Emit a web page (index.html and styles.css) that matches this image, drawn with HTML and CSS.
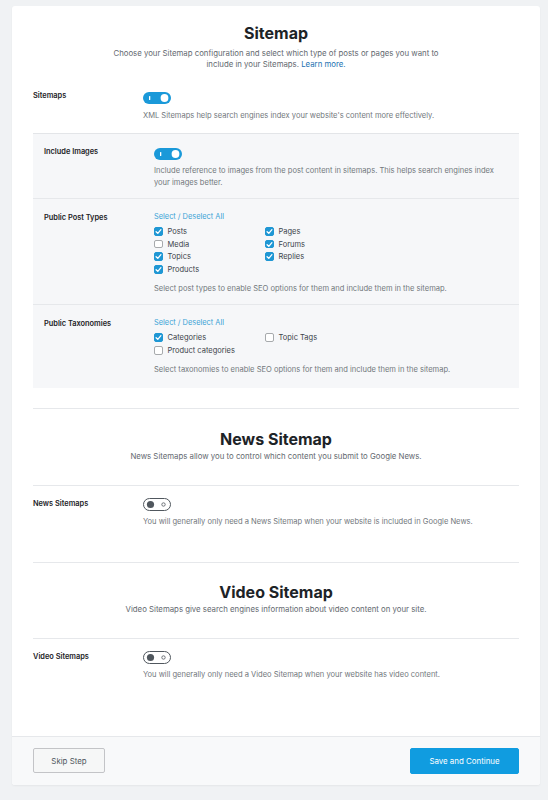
FILE: index.html
```html
<!DOCTYPE html>
<html lang="en">
<head>
<meta charset="utf-8">
<title>Sitemap</title>
<link rel="stylesheet" href="styles.css">
</head>
<body>
<div class="page">
  <div class="card">
    <div class="card-body">
      <section class="section first">
        <header class="sec-head">
          <h1>Sitemap</h1>
          <p>Choose your Sitemap configuration and select which type of posts or pages you want to include in your Sitemaps. <a href="#">Learn more.</a></p>
        </header>
        <div class="row plain">
          <div class="label">Sitemaps</div>
          <div class="control">
            <svg class="toggle" width="28" height="12" viewBox="0 0 28 12"><rect width="28" height="12" rx="6" fill="#1a99d9"/><rect x="6" y="4" width="1.3" height="4" rx="0.6" fill="#fff"/><circle cx="21.5" cy="6" r="3.9" fill="#fff"/></svg>
            <p class="desc">XML Sitemaps help search engines index your website's content more effectively.</p>
          </div>
        </div>
        <div class="panel">
          <div class="row boxed">
            <div class="label">Include Images</div>
            <div class="control">
              <svg class="toggle" width="28" height="12" viewBox="0 0 28 12"><rect width="28" height="12" rx="6" fill="#1a99d9"/><rect x="6" y="4" width="1.3" height="4" rx="0.6" fill="#fff"/><circle cx="21.5" cy="6" r="3.9" fill="#fff"/></svg>
              <p class="desc">Include reference to images from the post content in sitemaps. This helps search engines index your images better.</p>
            </div>
          </div>
          <div class="row boxed">
            <div class="label">Public Post Types</div>
            <div class="control">
              <a class="select-all" href="#">Select / Deselect All</a>
              <div class="checks">
                <label class="check"><span class="box on"><svg width="9" height="9" viewBox="0 0 9 9"><path d="M2.1 4.7 L3.8 6.3 L6.9 2.7" fill="none" stroke="#fff" stroke-width="1.3" stroke-linecap="round" stroke-linejoin="round"/></svg></span>Posts</label>
                <label class="check"><span class="box on"><svg width="9" height="9" viewBox="0 0 9 9"><path d="M2.1 4.7 L3.8 6.3 L6.9 2.7" fill="none" stroke="#fff" stroke-width="1.3" stroke-linecap="round" stroke-linejoin="round"/></svg></span>Pages</label>
                <label class="check"><span class="box"></span>Media</label>
                <label class="check"><span class="box on"><svg width="9" height="9" viewBox="0 0 9 9"><path d="M2.1 4.7 L3.8 6.3 L6.9 2.7" fill="none" stroke="#fff" stroke-width="1.3" stroke-linecap="round" stroke-linejoin="round"/></svg></span>Forums</label>
                <label class="check"><span class="box on"><svg width="9" height="9" viewBox="0 0 9 9"><path d="M2.1 4.7 L3.8 6.3 L6.9 2.7" fill="none" stroke="#fff" stroke-width="1.3" stroke-linecap="round" stroke-linejoin="round"/></svg></span>Topics</label>
                <label class="check"><span class="box on"><svg width="9" height="9" viewBox="0 0 9 9"><path d="M2.1 4.7 L3.8 6.3 L6.9 2.7" fill="none" stroke="#fff" stroke-width="1.3" stroke-linecap="round" stroke-linejoin="round"/></svg></span>Replies</label>
                <label class="check"><span class="box on"><svg width="9" height="9" viewBox="0 0 9 9"><path d="M2.1 4.7 L3.8 6.3 L6.9 2.7" fill="none" stroke="#fff" stroke-width="1.3" stroke-linecap="round" stroke-linejoin="round"/></svg></span>Products</label>
              </div>
              <p class="desc gap">Select post types to enable SEO options for them and include them in the sitemap.</p>
            </div>
          </div>
          <div class="row boxed last">
            <div class="label">Public Taxonomies</div>
            <div class="control">
              <a class="select-all" href="#">Select / Deselect All</a>
              <div class="checks">
                <label class="check"><span class="box on"><svg width="9" height="9" viewBox="0 0 9 9"><path d="M2.1 4.7 L3.8 6.3 L6.9 2.7" fill="none" stroke="#fff" stroke-width="1.3" stroke-linecap="round" stroke-linejoin="round"/></svg></span>Categories</label>
                <label class="check"><span class="box"></span>Topic Tags</label>
                <label class="check"><span class="box"></span>Product categories</label>
              </div>
              <p class="desc gap">Select taxonomies to enable SEO options for them and include them in the sitemap.</p>
            </div>
          </div>
        </div>
      </section>

      <section class="section sub">
        <header class="sec-head">
          <h2>News Sitemap</h2>
          <p>News Sitemaps allow you to control which content you submit to Google News.</p>
        </header>
        <div class="row lined">
          <div class="label">News Sitemaps</div>
          <div class="control">
            <svg class="toggle off" width="28" height="13" viewBox="0 0 28 13"><rect x="0.5" y="0.5" width="27" height="12" rx="6" fill="#fff" stroke="#50575e"/><circle cx="7.5" cy="6.5" r="3.6" fill="#50575e"/><circle cx="20.5" cy="6.5" r="1.7" fill="none" stroke="#50575e" stroke-width="0.8"/></svg>
            <p class="desc">You will generally only need a News Sitemap when your website is included in Google News.</p>
          </div>
        </div>
      </section>

      <section class="section sub">
        <header class="sec-head">
          <h2>Video Sitemap</h2>
          <p>Video Sitemaps give search engines information about video content on your site.</p>
        </header>
        <div class="row lined">
          <div class="label">Video Sitemaps</div>
          <div class="control">
            <svg class="toggle off" width="28" height="13" viewBox="0 0 28 13"><rect x="0.5" y="0.5" width="27" height="12" rx="6" fill="#fff" stroke="#50575e"/><circle cx="7.5" cy="6.5" r="3.6" fill="#50575e"/><circle cx="20.5" cy="6.5" r="1.7" fill="none" stroke="#50575e" stroke-width="0.8"/></svg>
            <p class="desc">You will generally only need a Video Sitemap when your website has video content.</p>
          </div>
        </div>
      </section>
    </div>
    <footer class="card-foot">
      <button class="btn skip" type="button">Skip Step</button>
      <button class="btn primary" type="button">Save and Continue</button>
    </footer>
  </div>
</div>
</body>
</html>
```

FILE: styles.css
```css
* { box-sizing: border-box; }

html, body {
  margin: 0;
  background: #f0f2f4;
  font-family: Inter, "Noto Sans", "Liberation Sans", sans-serif;
  color: #1d2327;
}

.page {
  padding: 6px 8px 14px 12px;
}

.card {
  background: #fff;
  border-radius: 3px;
  box-shadow: 0 1px 2px rgba(0, 0, 0, 0.05);
  overflow: hidden;
}

.card-body {
  padding: 17px 21px 44px;
}

.sec-head {
  text-align: center;
}

.sec-head h1,
.sec-head h2 {
  margin: 0;
  font-size: 16px;
  line-height: 20px;
  font-weight: 700;
  color: #1d2327;
}

.sec-head p {
  margin: 4.5px auto 0;
  max-width: 326px;
  font-size: 7.8px;
  line-height: 11.5px;
  color: #646970;
}

.sec-head a {
  color: #2271b1;
  text-decoration: none;
}

.section.first .sec-head {
  margin-bottom: 6.5px;
}

.section.sub {
  margin-top: 20px;
  padding-top: 20px;
  border-top: 1px solid #e6e8eb;
}

.section.sub + .section.sub {
  margin-top: 23px;
  padding-top: 19px;
}

.section.sub .sec-head p {
  margin-top: 2.5px;
  max-width: none;
}

.section.sub .sec-head {
  margin-bottom: 22px;
}

.row {
  display: grid;
  grid-template-columns: 110px 1fr;
}

.row.plain {
  padding: 13px 0 11.5px;
}

.row.lined {
  border-top: 1px solid #e6e8eb;
  padding: 12px 0 11px;
}

.label {
  font-size: 7.4px;
  line-height: 12px;
  font-weight: 600;
  color: #1d2327;
}

.row.boxed .label {
  padding-top: 0.5px;
}

.control {
  min-width: 0;
}

.toggle {
  display: block;
  margin-top: 2px;
}

.toggle.off {
  margin-top: 0;
}

.desc {
  margin: 5.5px 0 0;
  font-size: 7.55px;
  line-height: 11.5px;
  color: #72777c;
}

.desc.gap {
  margin-top: 7px;
}

.panel {
  background: #f6f7f9;
  border-top: 1px solid #e3e5e8;
}

.row.boxed {
  padding: 12px 11px 10px;
}

.row.boxed + .row.boxed {
  border-top: 1px solid #e6e8eb;
}

.row.boxed.last {
  padding-bottom: 12.5px;
}

.select-all {
  display: block;
  font-size: 7.4px;
  line-height: 11px;
  color: #3aa3d6;
  text-decoration: none;
}

.checks {
  display: grid;
  grid-template-columns: 111px 1fr;
  grid-auto-rows: 12.7px;
  margin-top: 3px;
}

.check {
  display: flex;
  align-items: center;
  gap: 5px;
  font-size: 7.5px;
  color: #3c434a;
}

.box {
  width: 8.5px;
  height: 8.5px;
  border: 1px solid #a7aaad;
  border-radius: 2px;
  background: #fff;
  flex: none;
  display: flex;
  align-items: center;
  justify-content: center;
}

.box.on {
  background: #1f97d4;
  border-color: #1f97d4;
}

.box svg {
  display: block;
  flex: none;
}

.card-foot {
  display: flex;
  justify-content: space-between;
  align-items: center;
  padding: 11px 21px;
  background: #f8f9fa;
  border-top: 1px solid #e6e8eb;
}

.btn {
  font-family: inherit;
  font-size: 7.9px;
  border-radius: 2px;
  cursor: pointer;
}

.btn.skip {
  width: 72px;
  height: 25px;
  background: #f6f7f7;
  border: 1px solid #c3c4c7;
  color: #50575e;
}

.btn.primary {
  width: 109px;
  height: 26px;
  background: #109ce0;
  border: 1px solid #109ce0;
  color: #fff;
}
```
